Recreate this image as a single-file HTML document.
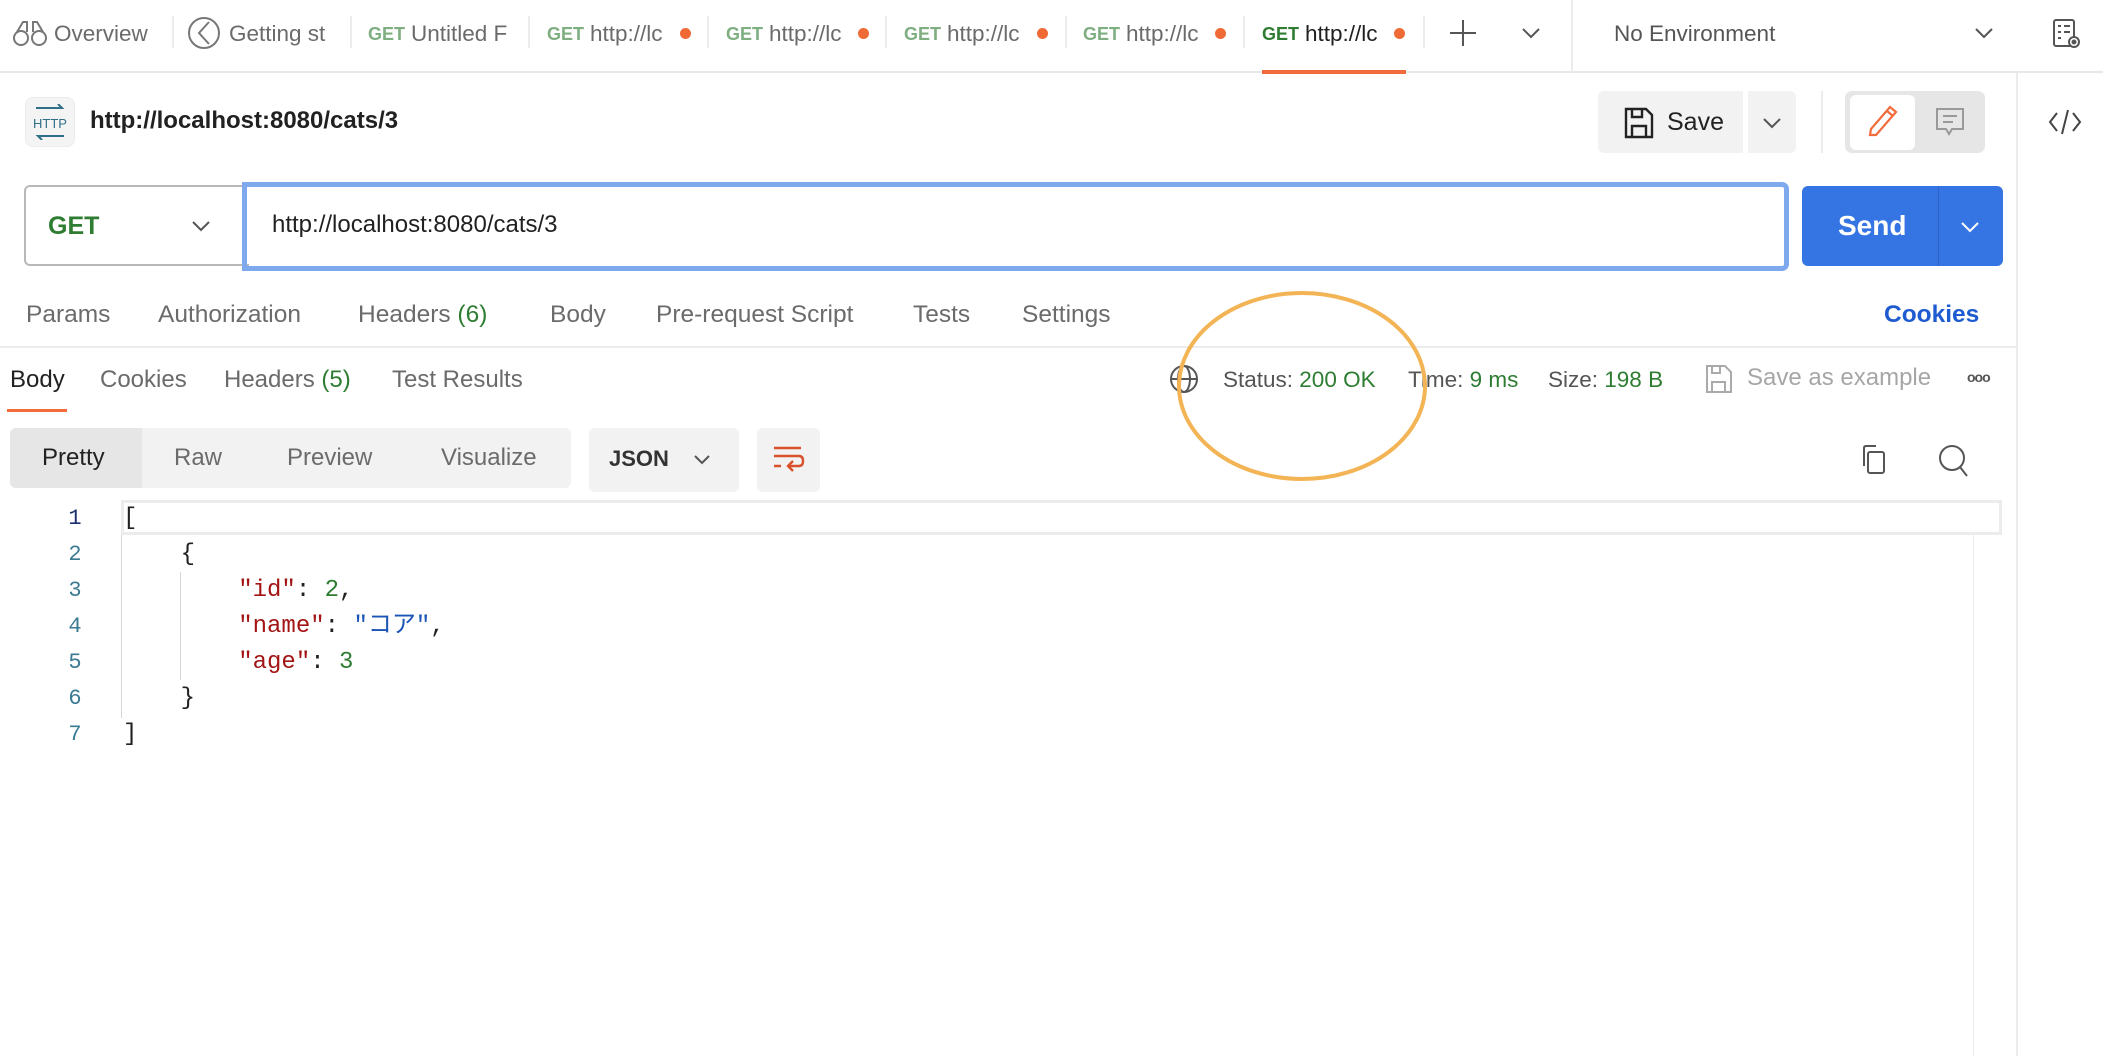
<!DOCTYPE html>
<html><head><meta charset="utf-8">
<style>
*{margin:0;padding:0;box-sizing:border-box}
body{width:2103px;height:1056px;background:#fff;font-family:"Liberation Sans","Noto Sans CJK JP",sans-serif;color:#212121;position:relative;overflow:hidden}
.a{position:absolute;white-space:nowrap;line-height:1.2}
.t{font-size:22.5px;color:#6b6b6b;top:20px}
.g{font-size:18px;color:#7fae80;top:24px;font-weight:bold}
.dot{width:11px;height:11px;border-radius:50%;background:#f06a35;top:28px}
.sep{width:2px;height:32px;background:#ececec;top:16px}
.tab2{font-size:24.5px;color:#6b6b6b;top:300px}
.tab3{font-size:24px;color:#6b6b6b;top:366px}
.ln{font-family:"Liberation Mono",monospace;font-size:22px;color:#3a7a93;width:30px;text-align:center;left:60px;line-height:36px}
.code{font-family:"Liberation Mono","Noto Sans CJK JP",monospace;font-size:24px;color:#212121;left:123px;white-space:pre;line-height:36px;height:36px}
.k{color:#a31515}.n{color:#2e7d32}.s{color:#1a54b6}
</style></head><body>
<!-- tab bar -->
<div class="a" style="left:0;top:71px;width:2103px;height:2px;background:#e8e8e8"></div>
<svg class="a" style="left:12px;top:18px" width="36" height="30" viewBox="0 0 36 30" fill="none" stroke="#777" stroke-width="2"><circle cx="9" cy="20" r="7"/><circle cx="27" cy="20" r="7"/><path d="M5 14 L11 4 H15 V14 M31 14 L25 4 H21 V14"/></svg>
<div class="a t" style="left:54px">Overview</div>
<div class="a sep" style="left:172px"></div>
<svg class="a" style="left:187px;top:16px" width="34" height="34" viewBox="0 0 34 34" fill="none" stroke="#777" stroke-width="2"><circle cx="17" cy="17" r="15"/><path d="M22 6 L12 17 L22 28"/></svg>
<div class="a t" style="left:229px">Getting st</div>
<div class="a sep" style="left:350px"></div>
<div class="a g" style="left:368px">GET</div><div class="a t" style="left:411px">Untitled F</div>
<div class="a sep" style="left:528px"></div>
<div class="a g" style="left:547px">GET</div><div class="a t" style="left:590px">http://lc</div><div class="a dot" style="left:680px"></div>
<div class="a sep" style="left:707px"></div>
<div class="a g" style="left:726px">GET</div><div class="a t" style="left:769px">http://lc</div><div class="a dot" style="left:858px"></div>
<div class="a sep" style="left:885px"></div>
<div class="a g" style="left:904px">GET</div><div class="a t" style="left:947px">http://lc</div><div class="a dot" style="left:1037px"></div>
<div class="a sep" style="left:1065px"></div>
<div class="a g" style="left:1083px">GET</div><div class="a t" style="left:1126px">http://lc</div><div class="a dot" style="left:1215px"></div>
<div class="a sep" style="left:1243px"></div>
<div class="a g" style="left:1262px;color:#2e7d32">GET</div><div class="a t" style="left:1305px;color:#212121">http://lc</div><div class="a dot" style="left:1394px"></div>
<div class="a" style="left:1262px;top:70px;width:144px;height:4px;background:#f26b3a"></div>
<div class="a sep" style="left:1423px"></div>
<svg class="a" style="left:1449px;top:19px" width="28" height="28" stroke="#555" stroke-width="2"><path d="M14 1V27M1 14H27"/></svg>
<svg class="a" style="left:1522px;top:27px" width="18" height="12" fill="none" stroke="#555" stroke-width="2"><path d="M1 2L9 10L17 2"/></svg>
<div class="a" style="left:1571px;top:0;width:2px;height:72px;background:#ececec"></div>
<div class="a t" style="left:1614px;color:#555">No Environment</div>
<svg class="a" style="left:1975px;top:27px" width="18" height="12" fill="none" stroke="#555" stroke-width="2"><path d="M1 2L9 10L17 2"/></svg>
<svg class="a" style="left:2052px;top:18px" width="30" height="32" fill="none" stroke="#555" stroke-width="2"><rect x="2" y="2" width="20" height="26" rx="2"/><path d="M6 8H9M12 8H18M6 14H9M12 14H18M6 20H9"/><circle cx="22" cy="24" r="5" fill="#fff"/><circle cx="22" cy="24" r="1.5" fill="#555"/></svg>
<!-- right sidebar -->
<div class="a" style="left:2016px;top:73px;width:2px;height:983px;background:#ececec"></div>
<svg class="a" style="left:2048px;top:108px" width="34" height="28" fill="none" stroke="#444" stroke-width="2"><path d="M9 5L2 14L9 23M25 5L32 14L25 23M20 2L14 26"/></svg>
<!-- header -->
<div class="a" style="left:25px;top:97px;width:50px;height:50px;border-radius:8px;background:#f4f4f4;border:1px solid #ececec"></div>
<svg class="a" style="left:30px;top:104px" width="40" height="36" fill="none" stroke="#2f6f88" stroke-width="2"><path d="M6 4H32L28 0M34 32H8L12 36"/><text x="20" y="24" font-family="Liberation Sans" font-size="13" fill="#2f6f88" stroke="none" text-anchor="middle">HTTP</text></svg>
<div class="a" style="left:90px;top:107px;font-size:24px;font-weight:bold">http://localhost:8080/cats/3</div>
<div class="a" style="left:1598px;top:91px;width:145px;height:62px;background:#f2f2f2;border-radius:6px 0 0 6px"></div>
<svg class="a" style="left:1624px;top:107px" width="30" height="32" fill="none" stroke="#222" stroke-width="2.4"><path d="M2 2H22L28 8V30H2Z M8 2V10H18V2 M8 30V19H22V30"/></svg>
<div class="a" style="left:1667px;top:107px;font-size:25px;color:#222">Save</div>
<div class="a" style="left:1748px;top:91px;width:48px;height:62px;background:#f2f2f2;border-radius:0 6px 6px 0"></div>
<svg class="a" style="left:1763px;top:117px" width="18" height="12" fill="none" stroke="#555" stroke-width="2"><path d="M1 2L9 10L17 2"/></svg>
<div class="a" style="left:1821px;top:91px;width:2px;height:62px;background:#ececec"></div>
<div class="a" style="left:1845px;top:91px;width:140px;height:62px;background:#e6e6e6;border-radius:7px"></div>
<div class="a" style="left:1850px;top:95px;width:65px;height:55px;background:#fff;border-radius:6px"></div>
<svg class="a" style="left:1868px;top:105px" width="30" height="32" fill="none" stroke="#f26b3a" stroke-width="2.2"><path d="M22 2L28 7L8 30L2 30L3 24Z M19 6L25 11"/></svg>
<svg class="a" style="left:1935px;top:107px" width="30" height="30" fill="none" stroke="#999" stroke-width="2"><path d="M2 2H28V22H17L14 27L11 22H2Z M8 9H22M8 15H18"/></svg>
<!-- url row -->
<div class="a" style="left:24px;top:185px;width:225px;height:81px;border:2px solid #b8b8b8;border-radius:6px 0 0 6px;border-right:none"></div>
<div class="a" style="left:48px;top:211px;font-size:25px;font-weight:bold;color:#2e7d32">GET</div>
<svg class="a" style="left:192px;top:220px" width="18" height="12" fill="none" stroke="#555" stroke-width="2"><path d="M1 2L9 10L17 2"/></svg>
<div class="a" style="left:242px;top:182px;width:1547px;height:89px;border:5px solid #7ea9ec;border-radius:0 7px 7px 0"></div>
<div class="a" style="left:272px;top:211px;font-size:24px;color:#212121">http://localhost:8080/cats/3</div>
<div class="a" style="left:1802px;top:186px;width:201px;height:80px;background:#3574e3;border-radius:6px"></div>
<div class="a" style="left:1938px;top:186px;width:1px;height:80px;background:#2d63c8"></div>
<div class="a" style="left:1838px;top:209px;font-size:28px;font-weight:bold;color:#fff">Send</div>
<svg class="a" style="left:1961px;top:221px" width="18" height="12" fill="none" stroke="#fff" stroke-width="2"><path d="M1 2L9 10L17 2"/></svg>
<!-- request tabs -->
<div class="a tab2" style="left:26px">Params</div>
<div class="a tab2" style="left:158px">Authorization</div>
<div class="a tab2" style="left:358px">Headers <span style="color:#2e7d32">(6)</span></div>
<div class="a tab2" style="left:550px">Body</div>
<div class="a tab2" style="left:656px">Pre-request Script</div>
<div class="a tab2" style="left:913px">Tests</div>
<div class="a tab2" style="left:1022px">Settings</div>
<div class="a" style="left:1884px;top:300px;font-size:24.5px;font-weight:bold;color:#1f5bd0">Cookies</div>
<div class="a" style="left:0;top:346px;width:2016px;height:2px;background:#ececec"></div>
<!-- response tabs -->
<div class="a tab3" style="left:10px;color:#212121">Body</div>
<div class="a" style="left:7px;top:409px;width:60px;height:3px;background:#f26b3a"></div>
<div class="a tab3" style="left:100px">Cookies</div>
<div class="a tab3" style="left:224px">Headers <span style="color:#2e7d32">(5)</span></div>
<div class="a tab3" style="left:392px">Test Results</div>
<svg class="a" style="left:1169px;top:364px" width="30" height="30" fill="none" stroke="#555" stroke-width="2"><circle cx="15" cy="15" r="13"/><ellipse cx="15" cy="15" rx="6" ry="13"/><path d="M2 15H28"/></svg>
<div class="a" style="left:1223px;top:366px;font-size:22.5px;color:#555">Status: <span style="color:#2e7d32">200 OK</span></div>
<div class="a" style="left:1408px;top:366px;font-size:22.5px;color:#555">Time: <span style="color:#2e7d32">9 ms</span></div>
<div class="a" style="left:1548px;top:366px;font-size:22.5px;color:#555">Size: <span style="color:#2e7d32">198 B</span></div>
<svg class="a" style="left:1705px;top:364px" width="28" height="30" fill="none" stroke="#aaa" stroke-width="2"><path d="M2 2H20L26 8V28H2Z M7 2V9H15V2 M7 28V18H20V28"/></svg>
<div class="a" style="left:1747px;top:364px;font-size:24px;color:#a6a6a6">Save as example</div>
<div class="a" style="left:1967px;top:369px;font-size:14px;color:#555;letter-spacing:-1px;font-weight:bold">ooo</div>
<!-- format bar -->
<div class="a" style="left:10px;top:428px;width:561px;height:60px;background:#f2f2f2;border-radius:6px"></div>
<div class="a" style="left:10px;top:428px;width:132px;height:60px;background:#e6e6e6;border-radius:6px 0 0 6px"></div>
<div class="a" style="left:42px;top:444px;font-size:24px;color:#222">Pretty</div>
<div class="a" style="left:174px;top:444px;font-size:24px;color:#6b6b6b">Raw</div>
<div class="a" style="left:287px;top:444px;font-size:24px;color:#6b6b6b">Preview</div>
<div class="a" style="left:441px;top:444px;font-size:24px;color:#6b6b6b">Visualize</div>
<div class="a" style="left:589px;top:428px;width:150px;height:64px;background:#f2f2f2;border-radius:6px"></div>
<div class="a" style="left:609px;top:446px;font-size:22px;font-weight:bold;color:#333">JSON</div>
<svg class="a" style="left:694px;top:454px" width="16" height="11" fill="none" stroke="#555" stroke-width="2"><path d="M1 2L8 9L15 2"/></svg>
<div class="a" style="left:757px;top:428px;width:63px;height:64px;background:#f2f2f2;border-radius:6px"></div>
<svg class="a" style="left:773px;top:446px" width="32" height="28" fill="none" stroke="#d9502a" stroke-width="2.4"><path d="M1 2H28M1 10H26Q30 10 30 15Q30 20 26 20H16M20 15L15 20L20 25M1 20H8"/></svg>
<svg class="a" style="left:1858px;top:444px" width="30" height="32" fill="none" stroke="#555" stroke-width="2"><path d="M6 22V4Q6 2 8 2H18"/><rect x="10" y="8" width="16" height="21" rx="2"/></svg>
<svg class="a" style="left:1938px;top:444px" width="32" height="34" fill="none" stroke="#555" stroke-width="2"><circle cx="14" cy="14" r="12"/><path d="M22 23L29 32"/></svg>
<!-- editor -->
<div class="a" style="left:121px;top:500px;width:1881px;height:35px;border:3px solid #ececec"></div>
<div class="a" style="left:121px;top:535px;width:1px;height:183px;background:#d6d6d6"></div>
<div class="a" style="left:180px;top:572px;width:1px;height:108px;background:#d6d6d6"></div>
<div class="a" style="left:1973px;top:535px;width:1px;height:521px;background:#ececec"></div>
<div class="a ln" style="top:501px;color:#1b2e6e">1</div>
<div class="a ln" style="top:537px">2</div>
<div class="a ln" style="top:573px">3</div>
<div class="a ln" style="top:609px">4</div>
<div class="a ln" style="top:645px">5</div>
<div class="a ln" style="top:681px">6</div>
<div class="a ln" style="top:717px">7</div>
<div class="a code" style="top:501px">[</div>
<div class="a code" style="top:537px">    {</div>
<div class="a code" style="top:573px">        <span class="k">"id"</span>: <span class="n">2</span>,</div>
<div class="a code" style="top:609px">        <span class="k">"name"</span>: <span class="s">"コア"</span>,</div>
<div class="a code" style="top:645px">        <span class="k">"age"</span>: <span class="n">3</span></div>
<div class="a code" style="top:681px">    }</div>
<div class="a code" style="top:717px">]</div>
<!-- annotation -->
<svg class="a" style="left:1170px;top:285px" width="265" height="200" fill="none"><ellipse cx="132" cy="101" rx="123" ry="93" stroke="#f3b455" stroke-width="4"/></svg>
</body></html>
